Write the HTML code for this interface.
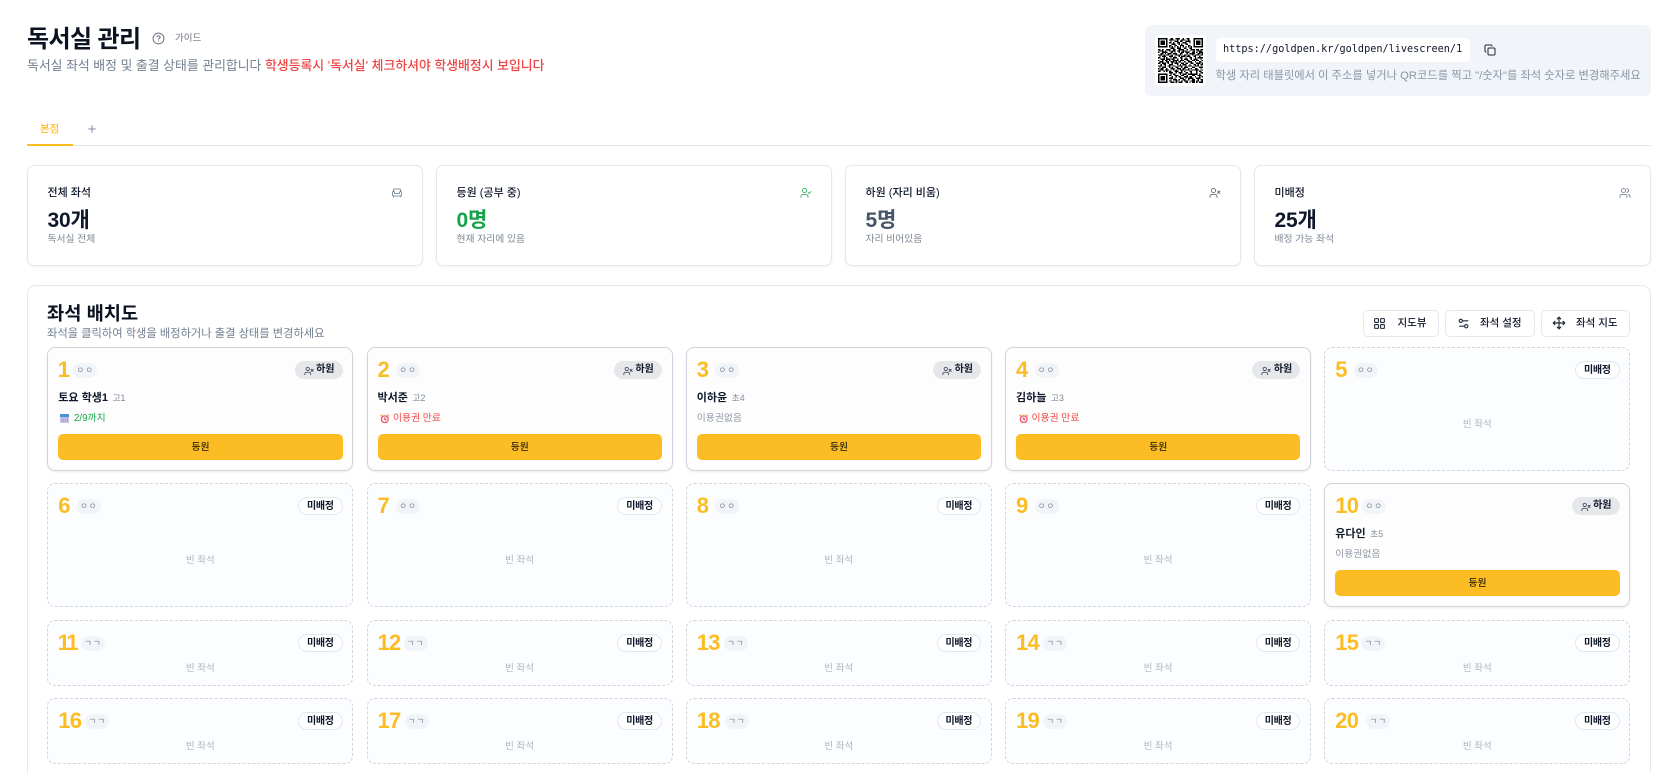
<!DOCTYPE html>
<html lang="ko"><head><meta charset="utf-8"><title>독서실 관리</title>
<style>
*{box-sizing:border-box}
html,body{margin:0;padding:0;width:1678px;height:773px;overflow:hidden;background:#fff}
body{position:relative;font-family:"Liberation Sans","Noto Sans CJK KR",sans-serif;color:#0f172a}
.a{position:absolute;white-space:nowrap}
svg.i{fill:none;stroke:currentColor;stroke-width:2;stroke-linecap:round;stroke-linejoin:round;position:absolute}
.stat{position:absolute;top:165px;width:396px;height:100.5px;background:#fff;border:1px solid #e2e8f0;border-radius:7px;box-shadow:0 1px 2px rgba(15,23,42,.05)}
.stat .l{position:absolute;left:19.5px;top:19px;font-size:11px;line-height:16px;font-weight:500;color:#0f172a}
.stat .v{position:absolute;left:19.5px;top:42px;font-size:21px;line-height:26px;font-weight:700;letter-spacing:-.2px}
.stat .s{position:absolute;left:19.5px;top:67px;font-size:9.8px;line-height:14px;color:#7b8794}
.stat svg{right:19px;top:21px;color:#64748b;stroke-width:1.6}
.btn{position:absolute;top:309.5px;height:27.5px;background:#fff;border:1px solid #e2e8f0;border-radius:5px;font-size:10.5px;line-height:25.5px;font-weight:500}
.btn span{position:absolute;top:0;white-space:nowrap}
.c{position:absolute;width:306px;border-radius:8px}
.f{background:#fdfdfd;border:1px solid #d1d5db;box-shadow:0 1px 2px rgba(15,23,42,.08)}
.e{background:#fcfdff;border:1px dashed #d1d5db}
.t{height:124px}.u{height:66px}
.n{position:absolute;left:10px;top:10px;font-size:22px;line-height:24px;font-weight:700;color:#fbbd23;letter-spacing:-.8px}
.h{position:absolute;top:14.5px;height:15.5px;width:24px;border-radius:8px;background:#f1f5f9;text-align:center;font-size:8.5px;line-height:14.5px;color:#7f8b99;letter-spacing:1px}
.b{position:absolute;right:9.7px;top:13px;height:18px;border-radius:9px;font-size:10px;line-height:18.5px;font-weight:700;color:#0f172a}
.bo{width:48px;background:#e5e7eb;padding-left:21.5px}
.bo svg{left:9px;top:4.5px;color:#334155}
.bu{width:44.5px;background:#fff;border:1px solid #e2e8f0;text-align:center;line-height:17px;letter-spacing:-.3px}
.m{position:absolute;left:10px;top:41.5px;line-height:16px;font-size:11px;font-weight:700;white-space:nowrap}
.m i{font-style:normal;font-weight:400;font-size:8.8px;color:#7f8b99;margin-left:4.5px}
.st{position:absolute;left:10px;top:64px;line-height:14px;font-size:9.8px;white-space:nowrap}
.go{position:absolute;left:10px;right:9.7px;top:86px;height:25.5px;border-radius:5px;background:#fbbd23;text-align:center;font-size:9.8px;line-height:27px;font-weight:500;color:#33290f}
.v0{position:absolute;left:0;right:0;text-align:center;font-size:9.5px;line-height:14px;color:#aeb4bd}
.t .v0{top:69.5px}.u .v0{top:41px}
</style></head><body>
<svg width="0" height="0" style="position:absolute"><defs>
<symbol id="ux" viewBox="0 0 24 24"><path d="M16 21v-2a4 4 0 0 0-4-4H6a4 4 0 0 0-4 4v2"/><circle cx="9" cy="7" r="4"/><path d="m17 8 5 5M22 8l-5 5"/></symbol>
<symbol id="uc" viewBox="0 0 24 24"><path d="M16 21v-2a4 4 0 0 0-4-4H6a4 4 0 0 0-4 4v2"/><circle cx="9" cy="7" r="4"/><path d="m16 11 2 2 4-4"/></symbol>
<symbol id="us" viewBox="0 0 24 24"><path d="M16 21v-2a4 4 0 0 0-4-4H6a4 4 0 0 0-4 4v2"/><circle cx="9" cy="7" r="4"/><path d="M22 21v-2a4 4 0 0 0-3-3.87M16 3.13a4 4 0 0 1 0 7.75"/></symbol>
<symbol id="ch" viewBox="0 0 24 24"><path d="M19 9V6a2 2 0 0 0-2-2H7a2 2 0 0 0-2 2v3"/><path d="M3 16a2 2 0 0 0 2 2h14a2 2 0 0 0 2-2v-5a2 2 0 0 0-4 0v1.5a.5.5 0 0 1-.5.5h-9a.5.5 0 0 1-.5-.5V11a2 2 0 0 0-4 0z"/><path d="M5 18v2M19 18v2"/></symbol>
<symbol id="cal" viewBox="0 0 10 10"><rect x="0" y="0" width="10" height="10" rx=".8" fill="#cfc9ea" stroke="none"/><rect x="0" y="0" width="10" height="3.4" fill="#4a90d9" stroke="none"/><path d="M2 4.6v4M4 4.6v4M6 4.6v4M8 4.6v4" stroke="#8d8bb8" stroke-width=".8" stroke-linecap="butt"/></symbol>
<symbol id="al" viewBox="0 0 10 10"><path d="M.6 2.4 2.4.6M9.4 2.4 7.6.6" stroke="#f4a62a" stroke-width="1.4"/><circle cx="5" cy="5.5" r="3.6" fill="#fde7ea" stroke="#ef4f6b" stroke-width="1.3"/><path d="M5 3.6v2l1.2.9" stroke="#d9304f" stroke-width=".9"/></symbol>
</defs></svg>

<div class="a" style="left:27px;top:25px;font-size:24px;line-height:30px;font-weight:700;letter-spacing:-.6px;color:#0b1220">독서실 관리</div>
<svg class="i" style="left:152px;top:32px;color:#6b7280;stroke-width:1.8" width="13" height="13" viewBox="0 0 24 24"><circle cx="12" cy="12" r="10"/><path d="M9.09 9a3 3 0 0 1 5.83 1c0 2-3 3-3 3M12 17h.01"/></svg>
<div class="a" style="left:175px;top:31.5px;font-size:9.5px;line-height:14px;color:#6b7280">가이드</div>
<div class="a" style="left:27px;top:56px;font-size:12.87px;line-height:20px;color:#738091">독서실 좌석 배정 및 출결 상태를 관리합니다 <span style="color:#ef4444;font-weight:500">학생등록시 '독서실' 체크하셔야 학생배정시 보입니다</span></div>

<div class="a" style="left:1145px;top:25px;width:506px;height:71px;background:#f1f5f9;border-radius:6px"></div>
<div class="a" style="left:1155px;top:35px;width:51px;height:51px;background:#fff;border-radius:3px"></div>
<svg class="a" style="left:1158px;top:38px" width="45" height="45" viewBox="0 0 33 33" shape-rendering="crispEdges"><path fill="none" stroke="#000" d="M0 .5h7M9 .5h2M13 .5h3M18 .5h1M21 .5h2M26 .5h7M0 1.5h1M6 1.5h1M8 1.5h4M14 1.5h1M17 1.5h3M22 1.5h1M26 1.5h1M32 1.5h1M0 2.5h1M2 2.5h3M6 2.5h1M9 2.5h1M12 2.5h3M16 2.5h2M20 2.5h4M26 2.5h1M28 2.5h3M32 2.5h1M0 3.5h1M2 3.5h3M6 3.5h1M8 3.5h2M11 3.5h1M14 3.5h2M18 3.5h3M23 3.5h1M26 3.5h1M28 3.5h3M32 3.5h1M0 4.5h1M2 4.5h3M6 4.5h1M10 4.5h3M15 4.5h1M17 4.5h1M20 4.5h2M26 4.5h1M28 4.5h3M32 4.5h1M0 5.5h1M6 5.5h1M8 5.5h2M12 5.5h2M16 5.5h3M22 5.5h2M26 5.5h1M32 5.5h1M0 6.5h7M8 6.5h1M10 6.5h1M12 6.5h1M14 6.5h1M16 6.5h1M18 6.5h1M20 6.5h1M22 6.5h1M24 6.5h1M26 6.5h7M9 7.5h3M14 7.5h3M19 7.5h2M23 7.5h2M0 8.5h2M3 8.5h1M6 8.5h3M11 8.5h2M15 8.5h4M21 8.5h1M24 8.5h3M28 8.5h2M31 8.5h2M1 9.5h3M5 9.5h1M8 9.5h1M10 9.5h3M14 9.5h2M18 9.5h3M23 9.5h1M26 9.5h1M29 9.5h3M0 10.5h1M3 10.5h4M9 10.5h2M12 10.5h1M15 10.5h1M17 10.5h2M20 10.5h3M25 10.5h2M28 10.5h1M30 10.5h3M2 11.5h2M5 11.5h1M7 11.5h3M11 11.5h3M16 11.5h2M21 11.5h1M23 11.5h4M29 11.5h2M32 11.5h1M0 12.5h3M4 12.5h1M6 12.5h2M10 12.5h1M13 12.5h4M19 12.5h2M22 12.5h1M25 12.5h1M27 12.5h3M31 12.5h2M1 13.5h1M3 13.5h3M8 13.5h3M12 13.5h1M15 13.5h1M17 13.5h3M21 13.5h3M26 13.5h2M30 13.5h1M0 14.5h2M4 14.5h1M6 14.5h1M9 14.5h1M11 14.5h3M16 14.5h2M20 14.5h1M23 14.5h2M27 14.5h1M29 14.5h4M2 15.5h3M6 15.5h3M10 15.5h2M14 15.5h1M17 15.5h1M19 15.5h3M24 15.5h1M26 15.5h3M31 15.5h1M0 16.5h1M3 16.5h1M5 16.5h2M8 16.5h1M11 16.5h4M16 16.5h3M21 16.5h2M25 16.5h2M28 16.5h2M32 16.5h1M1 17.5h3M6 17.5h2M9 17.5h3M13 17.5h1M15 17.5h2M19 17.5h1M22 17.5h3M27 17.5h1M30 17.5h2M0 18.5h2M3 18.5h3M7 18.5h1M10 18.5h1M12 18.5h3M17 18.5h2M20 18.5h2M24 18.5h2M28 18.5h3M32 18.5h1M2 19.5h1M4 19.5h2M8 19.5h3M14 19.5h1M16 19.5h1M18 19.5h3M23 19.5h1M26 19.5h2M29 19.5h1M31 19.5h2M0 20.5h3M5 20.5h1M7 20.5h2M11 20.5h2M15 20.5h3M20 20.5h1M22 20.5h3M27 20.5h3M1 21.5h1M3 21.5h3M8 21.5h1M10 21.5h1M13 21.5h2M17 21.5h1M19 21.5h3M25 21.5h2M30 21.5h3M0 22.5h1M2 22.5h2M6 22.5h1M9 22.5h3M14 22.5h3M18 22.5h2M22 22.5h1M24 22.5h1M27 22.5h2M31 22.5h1M1 23.5h3M5 23.5h3M11 23.5h1M13 23.5h1M16 23.5h3M20 23.5h3M25 23.5h5M32 23.5h1M0 24.5h2M4 24.5h1M6 24.5h1M8 24.5h2M12 24.5h3M17 24.5h1M19 24.5h1M23 24.5h2M28 24.5h1M30 24.5h2M8 25.5h3M13 25.5h1M15 25.5h3M20 25.5h2M24 25.5h1M28 25.5h1M31 25.5h2M0 26.5h7M9 26.5h1M11 26.5h2M16 26.5h1M18 26.5h3M22 26.5h2M24 26.5h5M30 26.5h1M0 27.5h1M6 27.5h1M8 27.5h2M12 27.5h3M17 27.5h2M21 27.5h1M25 27.5h2M29 27.5h3M0 28.5h1M2 28.5h3M6 28.5h1M10 28.5h1M13 28.5h1M15 28.5h2M19 28.5h3M23 28.5h2M27 28.5h1M30 28.5h1M32 28.5h1M0 29.5h1M2 29.5h3M6 29.5h1M8 29.5h3M12 29.5h1M16 29.5h3M20 29.5h1M22 29.5h4M28 29.5h3M0 30.5h1M2 30.5h3M6 30.5h1M9 30.5h1M11 30.5h3M15 30.5h1M18 30.5h2M22 30.5h1M25 30.5h2M29 30.5h1M31 30.5h2M0 31.5h1M6 31.5h1M8 31.5h2M13 31.5h2M17 31.5h1M19 31.5h3M24 31.5h3M28 31.5h2M32 31.5h1M0 32.5h7M9 32.5h3M13 32.5h1M15 32.5h3M20 32.5h2M23 32.5h1M25 32.5h2M28 32.5h1M30 32.5h3"/></svg>
<div class="a" style="left:1215.5px;top:38px;width:254px;height:24px;background:#fff;border-radius:4px;font-family:'DejaVu Sans Mono','Liberation Mono',monospace;font-size:10.2px;line-height:23px;padding-left:7.5px;color:#0f172a">https://goldpen.kr/goldpen/livescreen/1</div>
<svg class="i" style="left:1483.5px;top:44px;color:#1f2937;stroke-width:2" width="12" height="12" viewBox="0 0 24 24"><rect x="8" y="8" width="14" height="14" rx="2"/><path d="M4 16c-1.1 0-2-.9-2-2V4c0-1.1.9-2 2-2h10c1.1 0 2 .9 2 2"/></svg>
<div class="a" style="left:1215.5px;top:68.5px;font-size:11.27px;line-height:15px;color:#8a96a5">학생 자리 태블릿에서 이 주소를 넣거나 QR코드를 찍고 "/숫자"를 좌석 숫자로 변경해주세요</div>

<div class="a" style="left:40px;top:121px;font-size:10.5px;line-height:16px;font-weight:500;color:#fbbd23">본점</div>
<svg class="i" style="left:86px;top:123px;color:#64748b;stroke-width:1.6" width="12" height="12" viewBox="0 0 24 24"><path d="M5 12h14M12 5v14"/></svg>
<div class="a" style="left:27px;top:145px;width:1624px;height:1px;background:#e2e8f0"></div>
<div class="a" style="left:27px;top:143.5px;width:46px;height:2px;background:#fbbd23"></div>

<div class="stat" style="left:27px"><div class="l">전체 좌석</div><div class="v">30개</div><div class="s">독서실 전체</div><svg class="i" width="12" height="12"><use href="#ch"/></svg></div>
<div class="stat" style="left:436px"><div class="l">등원 (공부 중)</div><div class="v" style="color:#16a34a">0명</div><div class="s">현재 자리에 있음</div><svg class="i" style="color:#16a34a" width="12" height="12"><use href="#uc"/></svg></div>
<div class="stat" style="left:845px"><div class="l">하원 (자리 비움)</div><div class="v" style="color:#475569">5명</div><div class="s">자리 비어있음</div><svg class="i" style="color:#475569" width="12" height="12"><use href="#ux"/></svg></div>
<div class="stat" style="left:1254px;width:397px"><div class="l">미배정</div><div class="v">25개</div><div class="s">배정 가능 좌석</div><svg class="i" width="12" height="12"><use href="#us"/></svg></div>

<div class="a" style="left:27px;top:285px;width:1624px;height:600px;background:#fff;border:1px solid #e2e8f0;border-radius:9px"></div>
<div class="a" style="left:47px;top:301px;font-size:18.7px;line-height:26px;font-weight:700;color:#0b1220">좌석 배치도</div>
<div class="a" style="left:47px;top:326px;font-size:11.25px;line-height:16px;color:#738091">좌석을 클릭하여 학생을 배정하거나 출결 상태를 변경하세요</div>

<div class="btn" style="left:1363px;width:76px"><svg class="i" style="left:9px;top:6px;color:#1f2937;stroke-width:2" width="13" height="13" viewBox="0 0 24 24"><rect x="3" y="3" width="7" height="7" rx="1"/><rect x="14" y="3" width="7" height="7" rx="1"/><rect x="14" y="14" width="7" height="7" rx="1"/><rect x="3" y="14" width="7" height="7" rx="1"/></svg><span style="left:33.5px">지도뷰</span></div>
<div class="btn" style="left:1445px;width:90px"><svg class="i" style="left:11px;top:6px;color:#1f2937;stroke-width:2" width="13" height="13" viewBox="0 0 24 24"><path d="M20 7h-9M14 17H5"/><circle cx="17" cy="17" r="3"/><circle cx="7" cy="7" r="3"/></svg><span style="left:34px">좌석 설정</span></div>
<div class="btn" style="left:1541px;width:89px"><svg class="i" style="left:10px;top:5.5px;color:#1f2937;stroke-width:2" width="14" height="14" viewBox="0 0 24 24"><path d="M12 2v20M15 19l-3 3-3-3M19 9l3 3-3 3M2 12h20M5 9l-3 3 3 3M9 5l3-3 3 3"/></svg><span style="left:34px">좌석 지도</span></div>

<!-- row 1 -->
<div class="c t f" style="left:47.3px;top:347px"><div class="n" style="left:9.5px">1</div><div class="h" style="left:25px">ㅇㅇ</div><div class="b bo"><svg class="i" width="10" height="10"><use href="#ux"/></svg>하원</div><div class="m">토요 학생1<i>고1</i></div><svg class="a" style="left:11.7px;top:65.5px" width="9.5" height="9.5"><use href="#cal"/></svg><div class="st" style="left:25.7px;color:#16a34a">2/9까지</div><div class="go">등원</div></div>
<div class="c t f" style="left:366.55px;top:347px"><div class="n">2</div><div class="h" style="left:28.5px">ㅇㅇ</div><div class="b bo"><svg class="i" width="10" height="10"><use href="#ux"/></svg>하원</div><div class="m">박서준<i>고2</i></div><svg class="a" style="left:12.5px;top:65.5px" width="9.5" height="9.5"><use href="#al"/></svg><div class="st" style="left:25.5px;color:#ef4444">이용권 만료</div><div class="go">등원</div></div>
<div class="c t f" style="left:685.8px;top:347px"><div class="n">3</div><div class="h" style="left:28.5px">ㅇㅇ</div><div class="b bo"><svg class="i" width="10" height="10"><use href="#ux"/></svg>하원</div><div class="m">이하윤<i>초4</i></div><div class="st" style="color:#8f98a5">이용권없음</div><div class="go">등원</div></div>
<div class="c t f" style="left:1005.05px;top:347px"><div class="n">4</div><div class="h" style="left:28.5px">ㅇㅇ</div><div class="b bo"><svg class="i" width="10" height="10"><use href="#ux"/></svg>하원</div><div class="m">김하늘<i>고3</i></div><svg class="a" style="left:12.5px;top:65.5px" width="9.5" height="9.5"><use href="#al"/></svg><div class="st" style="left:25.5px;color:#ef4444">이용권 만료</div><div class="go">등원</div></div>
<div class="c t e" style="left:1324.3px;top:347px"><div class="n">5</div><div class="h" style="left:28.5px">ㅇㅇ</div><div class="b bu">미배정</div><div class="v0">빈 좌석</div></div>
<!-- row 2 -->
<div class="c t e" style="left:47.3px;top:483px"><div class="n">6</div><div class="h" style="left:28.5px">ㅇㅇ</div><div class="b bu">미배정</div><div class="v0">빈 좌석</div></div>
<div class="c t e" style="left:366.55px;top:483px"><div class="n">7</div><div class="h" style="left:28.5px">ㅇㅇ</div><div class="b bu">미배정</div><div class="v0">빈 좌석</div></div>
<div class="c t e" style="left:685.8px;top:483px"><div class="n">8</div><div class="h" style="left:28.5px">ㅇㅇ</div><div class="b bu">미배정</div><div class="v0">빈 좌석</div></div>
<div class="c t e" style="left:1005.05px;top:483px"><div class="n">9</div><div class="h" style="left:28.5px">ㅇㅇ</div><div class="b bu">미배정</div><div class="v0">빈 좌석</div></div>
<div class="c t f" style="left:1324.3px;top:483px"><div class="n">10</div><div class="h" style="left:37px">ㅇㅇ</div><div class="b bo"><svg class="i" width="10" height="10"><use href="#ux"/></svg>하원</div><div class="m">유다인<i>초5</i></div><div class="st" style="color:#8f98a5">이용권없음</div><div class="go">등원</div></div>
<!-- row 3 -->
<div class="c u e" style="left:47.3px;top:620px"><div class="n" style="left:9.5px;letter-spacing:-2.5px">11</div><div class="h" style="left:32.7px">ㄱㄱ</div><div class="b bu">미배정</div><div class="v0">빈 좌석</div></div>
<div class="c u e" style="left:366.55px;top:620px"><div class="n">12</div><div class="h" style="left:36px">ㄱㄱ</div><div class="b bu">미배정</div><div class="v0">빈 좌석</div></div>
<div class="c u e" style="left:685.8px;top:620px"><div class="n">13</div><div class="h" style="left:37px">ㄱㄱ</div><div class="b bu">미배정</div><div class="v0">빈 좌석</div></div>
<div class="c u e" style="left:1005.05px;top:620px"><div class="n">14</div><div class="h" style="left:37px">ㄱㄱ</div><div class="b bu">미배정</div><div class="v0">빈 좌석</div></div>
<div class="c u e" style="left:1324.3px;top:620px"><div class="n">15</div><div class="h" style="left:36px">ㄱㄱ</div><div class="b bu">미배정</div><div class="v0">빈 좌석</div></div>
<!-- row 4 -->
<div class="c u e" style="left:47.3px;top:698px"><div class="n">16</div><div class="h" style="left:37px">ㄱㄱ</div><div class="b bu">미배정</div><div class="v0">빈 좌석</div></div>
<div class="c u e" style="left:366.55px;top:698px"><div class="n">17</div><div class="h" style="left:37px">ㄱㄱ</div><div class="b bu">미배정</div><div class="v0">빈 좌석</div></div>
<div class="c u e" style="left:685.8px;top:698px"><div class="n">18</div><div class="h" style="left:38px">ㄱㄱ</div><div class="b bu">미배정</div><div class="v0">빈 좌석</div></div>
<div class="c u e" style="left:1005.05px;top:698px"><div class="n">19</div><div class="h" style="left:37px">ㄱㄱ</div><div class="b bu">미배정</div><div class="v0">빈 좌석</div></div>
<div class="c u e" style="left:1324.3px;top:698px"><div class="n">20</div><div class="h" style="left:41px">ㄱㄱ</div><div class="b bu">미배정</div><div class="v0">빈 좌석</div></div>
</body></html>
